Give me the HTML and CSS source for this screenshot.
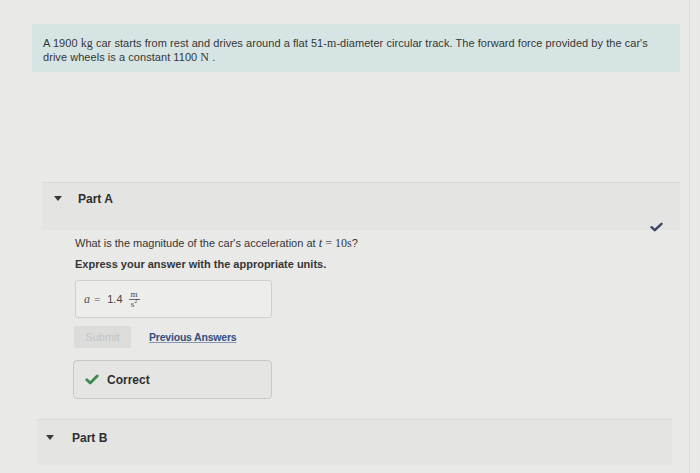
FILE: index.html
```html
<!DOCTYPE html>
<html>
<head>
<meta charset="utf-8">
<link rel="stylesheet" href="styles.css">
</head>
<body>
<div class="page">
  <div class="problem"><span class="ln">A 1900 <span class="m">kg</span> car starts from rest and drives around a flat 51-<span class="m">m</span>-diameter circular track. The forward force provided by the car's</span><span class="ln">drive wheels is a constant 1100 <span class="m">N</span> .</span></div>

  <section class="part part-a">
    <div class="part-head">
      <span class="tri"></span><span class="part-title">Part A</span>
      <svg class="done-check" width="13" height="10" viewBox="0 0 13 10"><path d="M1.5 5.2 L4.8 8.2 L11.5 1.8" fill="none" stroke="#3b4560" stroke-width="2.4" stroke-linecap="round" stroke-linejoin="round"/></svg>
    </div>
    <div class="part-body">
      <p class="q">What is the magnitude of the car's acceleration at <span class="mi">t</span> <span class="eq">=</span> <span class="m">10s</span>?</p>
      <p class="instr">Express your answer with the appropriate units.</p>
      <div class="answer">
        <span class="mi">a</span><span class="eq">=</span><span class="val">1.4</span>
        <span class="frac"><span class="num">m</span><span class="den">s<sup>2</sup></span></span>
      </div>
      <div class="actions">
        <span class="submit">Submit</span>
        <a class="prev">Previous Answers</a>
      </div>
      <div class="correct">
        <svg width="14" height="11" viewBox="0 0 14 11"><path d="M1.8 5.8 L5.2 9 L12.2 2" fill="none" stroke="#3f8a4e" stroke-width="2.8" stroke-linecap="round" stroke-linejoin="round"/></svg>
        <span>Correct</span>
      </div>
    </div>
  </section>

  <section class="part part-b">
    <div class="part-head">
      <span class="tri"></span><span class="part-title">Part B</span>
    </div>
  </section>
</div>
</body>
</html>
```

FILE: styles.css
```css
html, body {
  margin: 0;
  padding: 0;
  background: #e9e9e8;
}
body {
  font-family: "Liberation Sans", Arial, sans-serif;
  color: #363636;
  font-size: 11px;
}
.page {
  width: 690px;
  height: 473px;
  border-right: 1px solid #dadad9;
  box-sizing: border-box;
  overflow: hidden;
  padding-top: 24px;
}
.problem {
  margin-left: 32px;
  width: 648px;
  box-sizing: border-box;
  height: 48px;
  background: #d6e5e4;
  padding: 12px 11px 0 11px;
  line-height: 14px;
  letter-spacing: 0.05px;
  display: flex;
  flex-direction: column;
}
.ln {
  display: block;
  white-space: nowrap;
}
.m {
  font-family: "Liberation Serif", "Times New Roman", serif;
  font-size: 12px;
}
.mi {
  font-family: "Liberation Serif", "Times New Roman", serif;
  font-style: italic;
  font-size: 12.5px;
}
.eq {
  font-family: "Liberation Serif", serif;
  font-size: 12px;
  color: #555;
}
.part {
  position: relative;
}
.part-a {
  margin-top: 110px;
  margin-left: 42px;
  width: 638px;
}
.part-head {
  position: relative;
  height: 48px;
  box-sizing: border-box;
  background: #e4e4e3;
  border-top: 1px solid #d9d9d8;
  display: flex;
  align-items: center;
  padding-bottom: 16px;
}
.tri {
  width: 0;
  height: 0;
  border-left: 4px solid transparent;
  border-right: 4px solid transparent;
  border-top: 5px solid #3a3a3a;
  margin-left: 12px;
  margin-right: 16px;
}
.part-title {
  font-weight: bold;
  font-size: 12px;
  color: #2e2e2e;
}
.done-check {
  position: absolute;
  right: 17px;
  bottom: -2px;
}
.part-body {
  padding: 6px 0 0 33px;
}
.q {
  margin: 0;
  line-height: 14px;
}
.instr {
  margin: 7px 0 0;
  font-weight: bold;
  line-height: 14px;
}
.answer {
  margin-top: 9px;
  width: 197px;
  height: 38px;
  box-sizing: border-box;
  border: 1px solid #cfcfce;
  border-radius: 3px;
  background: #ededec;
  display: flex;
  align-items: center;
  padding-left: 8px;
  gap: 4px;
}
.answer .mi {
  font-size: 12px;
  color: #555;
}
.answer .eq {
  font-size: 11px;
  margin-right: 3px;
}
.val {
  font-size: 11px;
  color: #444;
  margin-right: 2px;
}
.frac {
  display: inline-flex;
  flex-direction: column;
  align-items: center;
  font-family: "Liberation Serif", serif;
  font-size: 9px;
  line-height: 9px;
  color: #444;
}
.num {
  border-bottom: 1px solid #666;
  padding: 0 2px;
}
.den sup {
  font-size: 6px;
  line-height: 0;
}
.actions {
  margin-top: 8px;
  display: flex;
  align-items: center;
  gap: 18px;
}
.submit {
  width: 57px;
  height: 22px;
  box-sizing: border-box;
  background: #dcdcdb;
  color: #c4c4c3;
  border-radius: 2px;
  display: flex;
  align-items: center;
  justify-content: center;
  font-size: 11px;
  margin-left: -1px;
}
.prev {
  font-weight: bold;
  color: #33507d;
  text-decoration: underline;
  text-decoration-color: #8796b0;
  font-size: 10.5px;
  letter-spacing: -0.2px;
}
.correct {
  margin-top: 12px;
  margin-left: -2px;
  width: 199px;
  height: 39px;
  box-sizing: border-box;
  border: 1px solid #c9c9c8;
  border-radius: 4px;
  background: #e5e5e4;
  display: flex;
  align-items: center;
  padding-left: 11px;
  gap: 8px;
  font-weight: bold;
  font-size: 12px;
  color: #2e2e2e;
}
.part-b {
  margin-top: 20px;
  margin-left: 37px;
  width: 635px;
}
.part-b .part-head {
  height: 46px;
  padding-bottom: 10px;
}
.part-b .tri {
  margin-left: 9px;
  margin-right: 18px;
}
```
